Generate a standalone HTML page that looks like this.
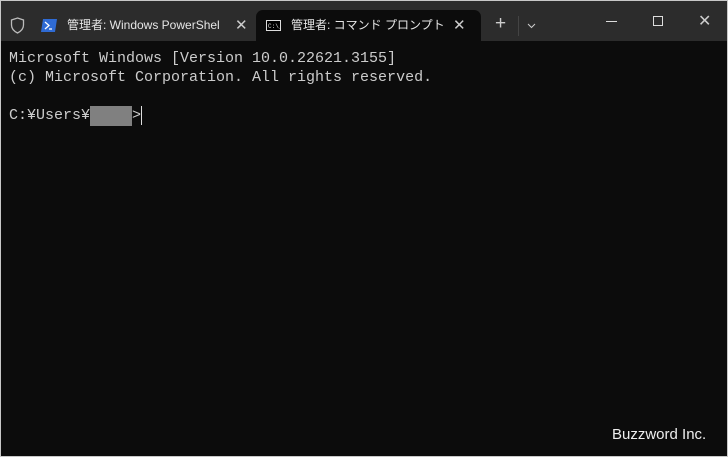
<!DOCTYPE html>
<html><head><meta charset="utf-8"><style>
*{margin:0;padding:0;box-sizing:border-box}
body{width:728px;height:457px;background:#c8c8c8;overflow:hidden;position:relative;font-family:"Liberation Sans","Noto Sans CJK JP",sans-serif}
#win{position:absolute;left:1px;top:1px;width:726px;height:455px;background:#0c0c0c}
#bar{position:absolute;left:0;top:0;width:726px;height:40px;background:#2c2c2c}
.tab{position:absolute;top:9px;height:31px;color:#e6e6e6;font-size:12px;line-height:31px}
#t2{left:255px;width:225px;background:#0c0c0c;border-radius:7px 7px 0 0}
.x{position:absolute;font-size:15px;color:#ccc}
#term{position:absolute;left:8px;top:48px;color:#cccccc;font-family:"Liberation Mono",monospace;font-size:15px;line-height:19px;white-space:pre}
</style></head><body>
<div id="win">
<div id="bar">
<svg style="position:absolute;left:9px;top:16px" width="15" height="17" viewBox="0 0 15 17"><path d="M7.5 1 L13.5 3 V8 C13.5 12 10.5 14.5 7.5 16 C4.5 14.5 1.5 12 1.5 8 V3 Z" fill="none" stroke="#bbb" stroke-width="1.3"/></svg>
<div class="tab" style="left:40px;width:205px">
<svg style="position:absolute;left:0;top:9px" width="16" height="13"><path d="M2 0H16L14 13H0Z" fill="#2f6bd4"/><path d="M4 3L8 6.5L4 10M8 10H11" stroke="#fff" stroke-width="1.3" fill="none"/></svg>
<span style="position:absolute;left:26px">管理者: Windows PowerShel</span>
<span class="x" style="left:194px;top:0">✕</span></div>
<div class="tab" id="t2">
<svg style="position:absolute;left:10px;top:10px" width="15" height="11"><rect x="0.5" y="0.5" width="14" height="10" fill="#000" stroke="#ddd"/><text x="2" y="8" font-size="6" fill="#ddd" font-family="Liberation Mono">C:\_</text></svg>
<span style="position:absolute;left:35px">管理者: コマンド プロンプト</span>
<span class="x" style="left:197px;top:0">✕</span></div>
<span class="x" style="left:494px;top:12px;font-size:19px;font-weight:300">+</span>
<div style="position:absolute;left:517px;top:15px;width:1px;height:20px;background:#444"></div>
<svg style="position:absolute;left:526px;top:22px" width="9" height="6"><path d="M1 1L4.5 4.5L8 1" stroke="#ccc" fill="none"/></svg>
<div style="position:absolute;left:605px;top:20px;width:11px;height:1px;background:#ddd"></div>
<div style="position:absolute;left:652px;top:15px;width:10px;height:10px;border:1px solid #ddd"></div>
<span class="x" style="left:697px;top:10px;font-size:16px">✕</span>
</div>
<div id="term">Microsoft Windows [Version 10.0.22621.3155]
(c) Microsoft Corporation. All rights reserved.

C:¥Users¥<span style="background:#808080;color:#808080;display:inline-block;width:42px;height:20px;vertical-align:top"> </span>&gt;<span style="display:inline-block;width:1px;height:19px;background:#ddd;vertical-align:top"></span></div>
<div style="position:absolute;left:611px;top:425px;color:#eee;font-size:15px">Buzzword Inc.</div>
</div>
</body></html>
